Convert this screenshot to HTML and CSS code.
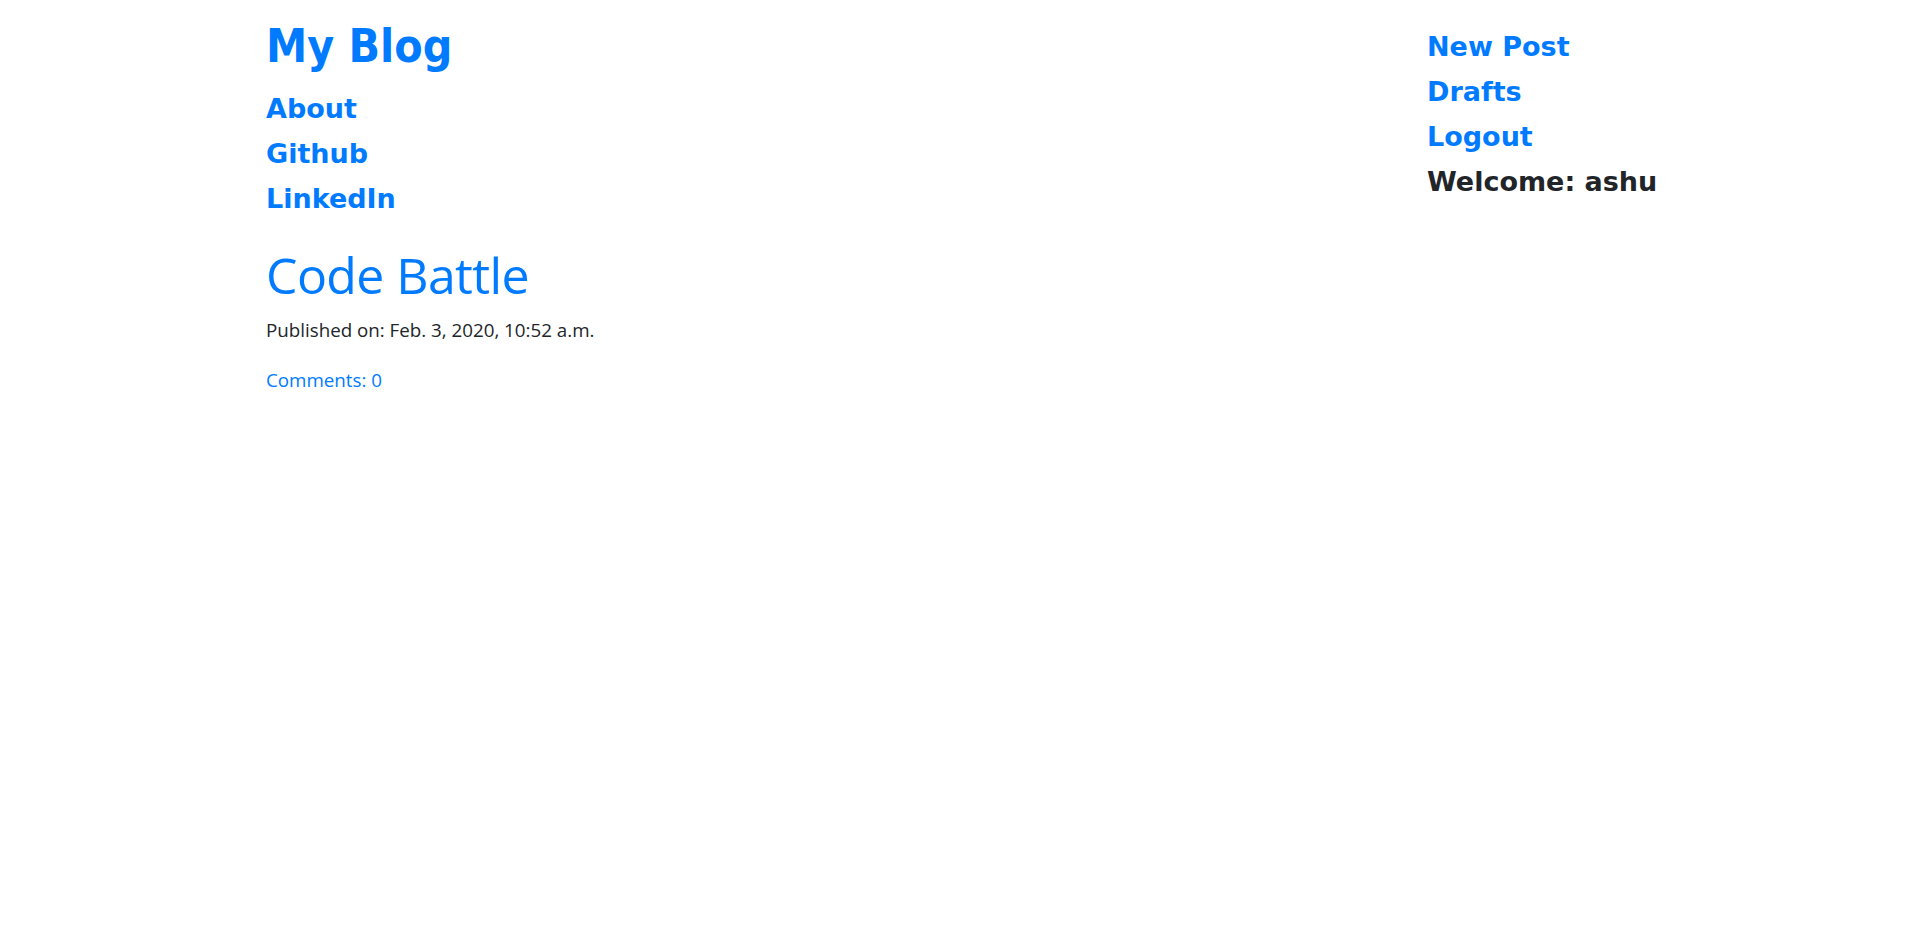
FILE: index.html
```html
<!DOCTYPE html>
<html lang="en">
<head>
<meta charset="utf-8">
<title>My Blog</title>
<link rel="stylesheet" href="styles.css">
</head>
<body>
<div class="container">
  <header class="top">
    <div class="brand-col">
      <h1 class="brand"><a href="#">My Blog</a></h1>
      <nav class="nav">
        <a class="nav-link" href="#">About</a>
        <a class="nav-link" href="#">Github</a>
        <a class="nav-link" href="#">LinkedIn</a>
      </nav>
    </div>
    <div class="user-col">
      <a class="nav-link" href="#">New Post</a>
      <a class="nav-link" href="#">Drafts</a>
      <a class="nav-link" href="#">Logout</a>
      <span class="nav-link welcome">Welcome: ashu</span>
    </div>
  </header>
  <main class="posts">
    <article class="post">
      <h2 class="post-title"><a href="#">Code Battle</a></h2>
      <p class="post-date">Published on: Feb. 3, 2020, 10:52 a.m.</p>
      <a class="post-comments" href="#">Comments: 0</a>
    </article>
  </main>
</div>
</body>
</html>
```
FILE: styles.css
```css
html, body {
  margin: 0;
  padding: 0;
  background: #fff;
}
body {
  font-family: "Open Sans", "Noto Sans", sans-serif;
  color: #212529;
}
a {
  color: #007bff;
  text-decoration: none;
}
.container {
  width: 1425px;
  margin: 0 auto;
  padding: 0 19px;
  box-sizing: border-box;
}
.top {
  display: flex;
  justify-content: space-between;
}
.brand-col {
  display: flex;
  flex-direction: column;
}
.brand {
  margin: 0;
  padding-top: 18px;
  font-family: "DejaVu Sans Condensed", "DejaVu Sans", sans-serif;
  font-weight: 700;
  font-size: 46px;
  line-height: 56px;
}
.nav {
  display: flex;
  flex-direction: column;
  padding-top: 12px;
}
.nav-link {
  font-family: "DejaVu Sans", sans-serif;
  font-weight: 700;
  font-size: 27px;
  line-height: 45px;
  white-space: nowrap;
}
.user-col {
  display: flex;
  flex-direction: column;
  width: 226px;
  padding-top: 24px;
}
.welcome {
  color: #212529;
}
.posts {
  padding-top: 24px;
}
.post-title {
  margin: 0;
  font-weight: 400;
  font-size: 50px;
  line-height: 60px;
  letter-spacing: -0.6px;
}
.post-date {
  margin: 10px 0 20px;
  font-size: 18.75px;
  line-height: 30px;
}
.post-comments {
  display: inline-block;
  font-size: 18.75px;
  line-height: 30px;
}
```
